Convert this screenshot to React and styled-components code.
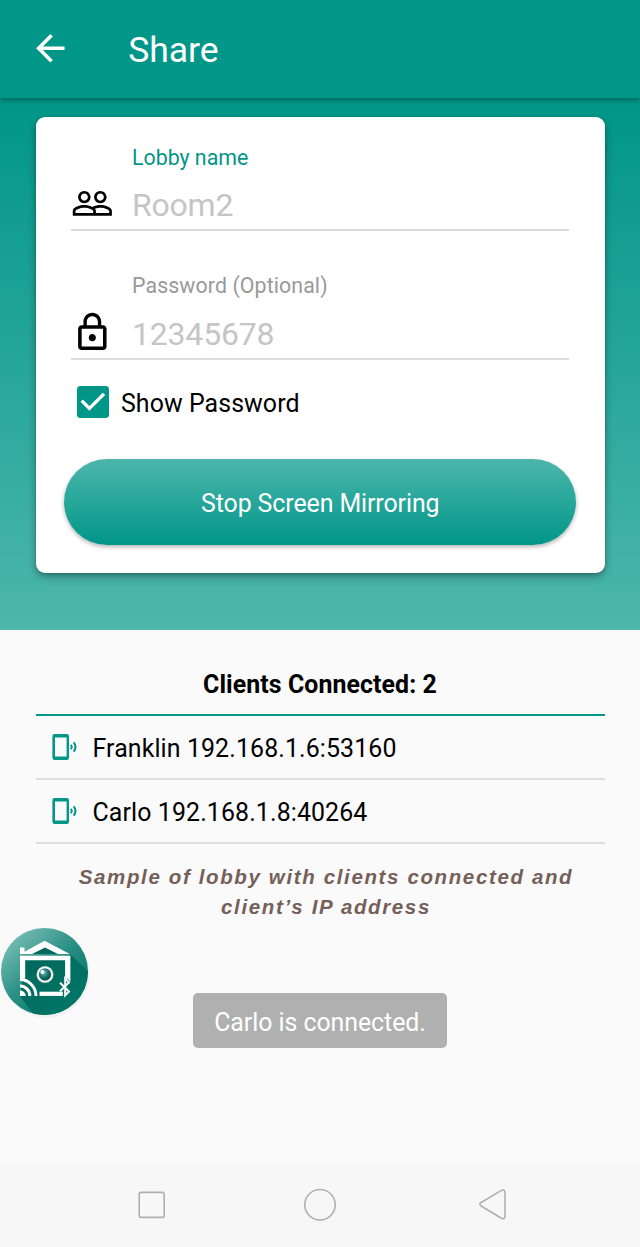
import React from 'react';
import styled, { createGlobalStyle } from 'styled-components';

const GlobalStyle = createGlobalStyle`
  * { box-sizing: border-box; }
  body { margin: 0; background: #fafafa; font-family: Roboto, "Liberation Sans", sans-serif; }
`;

const Screen = styled.div`
  position: relative;
  width: 640px;
  height: 1247px;
  display: flex;
  flex-direction: column;
  background: #fafafa;
  overflow: hidden;
`;

const AppBar = styled.header`
  position: relative;
  z-index: 1;
  height: 98px;
  flex: none;
  display: flex;
  align-items: center;
  gap: 57px;
  padding: 2px 0 0 28.6px;
  background: #009688;
  box-shadow: 0 2px 5px rgba(0, 0, 0, 0.34);
`;

const BackButton = styled.button`
  display: flex;
  padding: 0;
  margin-top: -2.6px;
  border: 0;
  background: none;
  color: #fff;
`;

const Title = styled.h1`
  margin: 0;
  font-size: 35.5px;
  font-weight: 400;
  line-height: 42px;
  letter-spacing: -0.05px;
  color: #fff;
`;

const Hero = styled.section`
  height: 532px;
  flex: none;
  padding: 18.5px 35.5px 0;
  background: linear-gradient(#009688, #4db6ac);
`;

const Card = styled.form`
  height: 456.5px;
  padding: 28px 28px 0;
  display: flex;
  flex-direction: column;
  border-radius: 9px;
  background: #fff;
  box-shadow: 0 4px 9px rgba(0, 0, 0, 0.3), 0 1px 3px rgba(0, 0, 0, 0.2);
`;

const Field = styled.div`
  height: ${(p) => p.$height}px;
  flex: none;
  margin: 0 7.5px;
  display: grid;
  grid-template-columns: 43px 1fr;
  grid-template-rows: 25px 1fr;
  column-gap: 18px;
  border-bottom: 2px solid #dcdcdc;

  & + & { margin-top: 42px; }
`;

const Label = styled.label`
  grid-column: 2;
  font-size: 21.33px;
  line-height: 25px;
  letter-spacing: ${(p) => (p.$active ? 0 : 0.1)}px;
  color: ${(p) => (p.$active ? '#009688' : '#999')};
`;

const FieldIcon = styled.span`
  grid-row: 2;
  display: flex;
  padding-top: ${(p) => p.$top}px;
  color: #000;
`;

const Value = styled.span`
  padding-top: ${(p) => p.$top}px;
  font-size: 32px;
  line-height: 38px;
  letter-spacing: -0.2px;
  color: #c5c5c5;
`;

const CheckRow = styled.label`
  display: flex;
  align-items: center;
  gap: 12.5px;
  height: 33px;
  margin: 26px 0 0 13px;
  font-size: 24.9px;
  letter-spacing: 0.08px;
  color: #000;
`;

const CheckText = styled.span`
  padding-top: 2px;
`;

const CheckBox = styled.span`
  width: 32px;
  height: 32px;
  display: flex;
  border-radius: 3.5px;
  background: #009688;
`;

const MirrorButton = styled.button`
  flex: none;
  height: 86px;
  width: 512px;
  margin-top: 40px;
  padding: 3px 0 0 1.5px;
  border: 0;
  border-radius: 43px;
  font-family: inherit;
  font-size: 24.9px;
  letter-spacing: -0.08px;
  color: #fff;
  background: linear-gradient(#4db6ac, #009688);
  box-shadow: 0 2px 4px rgba(0, 0, 0, 0.3);
`;

const Clients = styled.section`
  flex: 1;
  padding: 38px 35.5px 0;
`;

const ClientsTitle = styled.h2`
  height: 48px;
  margin: 0;
  border-bottom: 2px solid #009688;
  font-size: 24.9px;
  font-weight: 700;
  line-height: 33px;
  letter-spacing: 0.08px;
  text-align: center;
  color: #000;
`;

const ClientRow = styled.div`
  height: 64px;
  display: flex;
  align-items: center;
  gap: 15px;
  padding: 2px 0 0 16px;
  border-bottom: 2px solid #dedede;
  font-size: 24.9px;
  letter-spacing: 0.12px;
  color: #000;

  svg { margin-top: -3px; }
`;

const Caption = styled.p`
  margin: 18px 0 0 12px;
  font: italic 700 20.5px/30px "Liberation Sans", sans-serif;
  letter-spacing: 1.63px;
  text-align: center;
  color: #756059;
`;

const FloatingLogo = styled.div`
  position: absolute;
  left: 0;
  top: 926px;
  display: flex;
`;

const Toast = styled.div`
  position: absolute;
  left: 193px;
  top: 993px;
  width: 254px;
  height: 55px;
  padding-top: 3px;
  display: flex;
  align-items: center;
  justify-content: center;
  border-radius: 5px;
  background: #b0b0b0;
  font-size: 24.9px;
  letter-spacing: -0.05px;
  color: #fff;
`;

const NavBar = styled.nav`
  height: 85px;
  flex: none;
  display: flex;
  align-items: center;
  justify-content: space-between;
  padding: 0 132.5px 0 135.5px;
  background: #f7f7f7;

  svg { overflow: visible; }
`;

const Icon = ({ d, size = 42.67 }) => (
  <svg width={size} height={size} viewBox="0 0 24 24" fill="currentColor">
    <path d={d} />
  </svg>
);

const ARROW = 'M20 11H7.83l5.59-5.59L12 4l-8 8 8 8 1.41-1.41L7.83 13H20v-2z';
const PEOPLE =
  'M16.5 13c-1.2 0-3.07.34-4.5 1-1.43-.67-3.3-1-4.5-1C5.33 13 1 14.08 1 16.25V19h22v-2.75c0-2.17-4.33-3.25-6.5-3.25zm-4 4.5h-10v-1.25c0-.54 2.56-1.75 5-1.75s5 1.21 5 1.75v1.25zm9 0H14v-1.25c0-.46-.2-.86-.52-1.22.88-.3 1.96-.53 3.02-.53 2.44 0 5 1.21 5 1.75v1.25zM7.5 12c1.93 0 3.5-1.57 3.5-3.5S9.43 5 7.5 5 4 6.57 4 8.5 5.57 12 7.5 12zm0-5.5c1.1 0 2 .9 2 2s-.9 2-2 2-2-.9-2-2 .9-2 2-2zm9 5.5c1.93 0 3.5-1.57 3.5-3.5S18.43 5 16.5 5 13 6.57 13 8.5s1.57 3.5 3.5 3.5zm0-5.5c1.1 0 2 .9 2 2s-.9 2-2 2-2-.9-2-2 .9-2 2-2z';
const LOCK =
  'M12 17c1.1 0 2-.9 2-2s-.9-2-2-2-2 .9-2 2 .9 2 2 2zm6-9h-1V6c0-2.76-2.24-5-5-5S7 3.24 7 6v2H6c-1.1 0-2 .9-2 2v10c0 1.1.9 2 2 2h12c1.1 0 2-.9 2-2V10c0-1.1-.9-2-2-2zM8.9 6c0-1.71 1.39-3.1 3.1-3.1s3.1 1.39 3.1 3.1v2H8.9V6zM18 20H6V10h12v10z';

const CheckMark = () => (
  <svg width="32" height="32" viewBox="0 0 32 32" fill="none" stroke="#fff" strokeWidth="3.3">
    <path d="M4.7 14.6L12.4 22.4L27 7.8" />
  </svg>
);

const PhoneIcon = () => (
  <svg width="26" height="28" viewBox="0 0 26 28" fill="none" stroke="#009688">
    <path
      d="M2.6 1h12.2a2.2 2.2 0 0 1 2.2 2.2v21.6a2.2 2.2 0 0 1-2.2 2.2H2.6a2.2 2.2 0 0 1-2.2-2.2V3.2A2.2 2.2 0 0 1 2.6 1zM3 4.4v19.2h11.6V4.4z"
      fill="#009688"
      fillRule="evenodd"
      stroke="none"
    />
    <path d="M18.8 11.8q1.8 2.2 0 4.4M21.7 9.4q3.6 4.6 0 9.2" strokeWidth="2" />
  </svg>
);

const Logo = () => (
  <svg width="92" height="94" viewBox="0 0 92 94">
    <defs>
      <linearGradient id="disc" x1="0.1" y1="0.1" x2="0.8" y2="0.9">
        <stop offset="0" stopColor="#79beb5" />
        <stop offset="0.5" stopColor="#2b9086" />
        <stop offset="1" stopColor="#007466" />
      </linearGradient>
      <linearGradient id="shade" x1="0.2" y1="0.1" x2="0.8" y2="0.8">
        <stop offset="0" stopColor="#00685c" />
        <stop offset="1" stopColor="#007768" />
      </linearGradient>
      <radialGradient id="lens" cx="0.4" cy="0.35" r="0.7">
        <stop offset="0" stopColor="#7cc4bd" />
        <stop offset="0.55" stopColor="#12756d" />
        <stop offset="1" stopColor="#03443e" />
      </radialGradient>
      <clipPath id="discClip"><circle cx="44.5" cy="45.5" r="43.5" /></clipPath>
    </defs>
    <circle cx="46" cy="48" r="44" fill="#000" opacity="0.035" />
    <circle cx="44.5" cy="45.5" r="43.5" fill="url(#disc)" />
    <g clipPath="url(#discClip)">
      <path d="M70 28L96 53V95H38L20 70L25 34H70z" fill="url(#shade)" />
    </g>
    <path d="M32 28L45 21L58 28z" fill="#00695d" />
    <path d="M20 21.5h4.5v4.2L44.5 14.8L69.8 28H20zM45 21.4L32 28H58z" fill="#fff" fillRule="evenodd" />
    <path d="M20 29.8h50.4v26l-2.8-3.2-2.5 1V34.3H25.2V52.5H20z" fill="#fff" />
    <path d="M39.5 65.7h23.3v4.2H39.5z" fill="#fff" />
    <path d="M20 64.2A6 6 0 0 1 25.8 69.9H20z" fill="#fff" />
    <path d="M20 60A9.8 9.8 0 0 1 29.8 69.9M20 53.6A16.2 16.2 0 0 1 36 69.9" fill="none" stroke="#fff" strokeWidth="3" />
    <path d="M60 56.8L69 65.6L65.2 69.3V52.4L69 56.4L60 65.2" fill="none" stroke="#fff" strokeWidth="2" />
    <circle cx="45" cy="48.5" r="8.6" fill="#a7b8b4" />
    <circle cx="45" cy="48.5" r="7.2" fill="none" stroke="#f4f4f4" strokeWidth="1.7" />
    <circle cx="45" cy="48.5" r="5.9" fill="url(#lens)" />
    <circle cx="42.4" cy="46.1" r="2" fill="#fff" />
  </svg>
);

const clients = [
  { name: 'Franklin', address: '192.168.1.6:53160' },
  { name: 'Carlo', address: '192.168.1.8:40264' },
];

export default function App() {
  return (
    <>
      <GlobalStyle />
      <Screen>
        <AppBar>
          <BackButton type="button" aria-label="Back"><Icon d={ARROW} /></BackButton>
          <Title>Share</Title>
        </AppBar>
        <Hero>
          <Card>
            <Field $height={86.5}>
              <Label $active>Lobby name</Label>
              <FieldIcon $top={12.4}><Icon d={PEOPLE} /></FieldIcon>
              <Value $top={16}>Room2</Value>
            </Field>
            <Field $height={86.5}>
              <Label>Password (Optional)</Label>
              <FieldIcon $top={12.8}><Icon d={LOCK} /></FieldIcon>
              <Value $top={16.5}>12345678</Value>
            </Field>
            <CheckRow>
              <CheckBox><CheckMark /></CheckBox>
              <CheckText>Show Password</CheckText>
            </CheckRow>
            <MirrorButton type="button">Stop Screen Mirroring</MirrorButton>
          </Card>
        </Hero>
        <Clients>
          <ClientsTitle>Clients Connected: {clients.length}</ClientsTitle>
          {clients.map((c) => (
            <ClientRow key={c.name}>
              <PhoneIcon />
              {c.name} {c.address}
            </ClientRow>
          ))}
          <Caption>
            Sample of lobby with clients connected and
            <br />
            client’s IP address
          </Caption>
        </Clients>
        <NavBar>
          <svg width="31" height="34" viewBox="0 0 31 34" fill="none" stroke="#b0b0b0" strokeWidth="1.6">
            <rect x="3.2" y="4.4" width="25" height="25" rx="2" />
          </svg>
          <svg width="34" height="34" viewBox="0 0 34 34" fill="none" stroke="#b0b0b0" strokeWidth="1.6">
            <circle cx="15" cy="16.7" r="15.2" />
          </svg>
          <svg width="30" height="34" viewBox="0 0 30 34" fill="none" stroke="#b0b0b0" strokeWidth="1.6">
            <path d="M3.1 14.5L23.4 2.4Q26.6 1.1 27 4V28.5Q26.6 31.6 23.4 30.3L3.1 18Q.5 16.3 3.1 14.5z" />
          </svg>
        </NavBar>
        <FloatingLogo><Logo /></FloatingLogo>
        <Toast>Carlo is connected.</Toast>
      </Screen>
    </>
  );
}
